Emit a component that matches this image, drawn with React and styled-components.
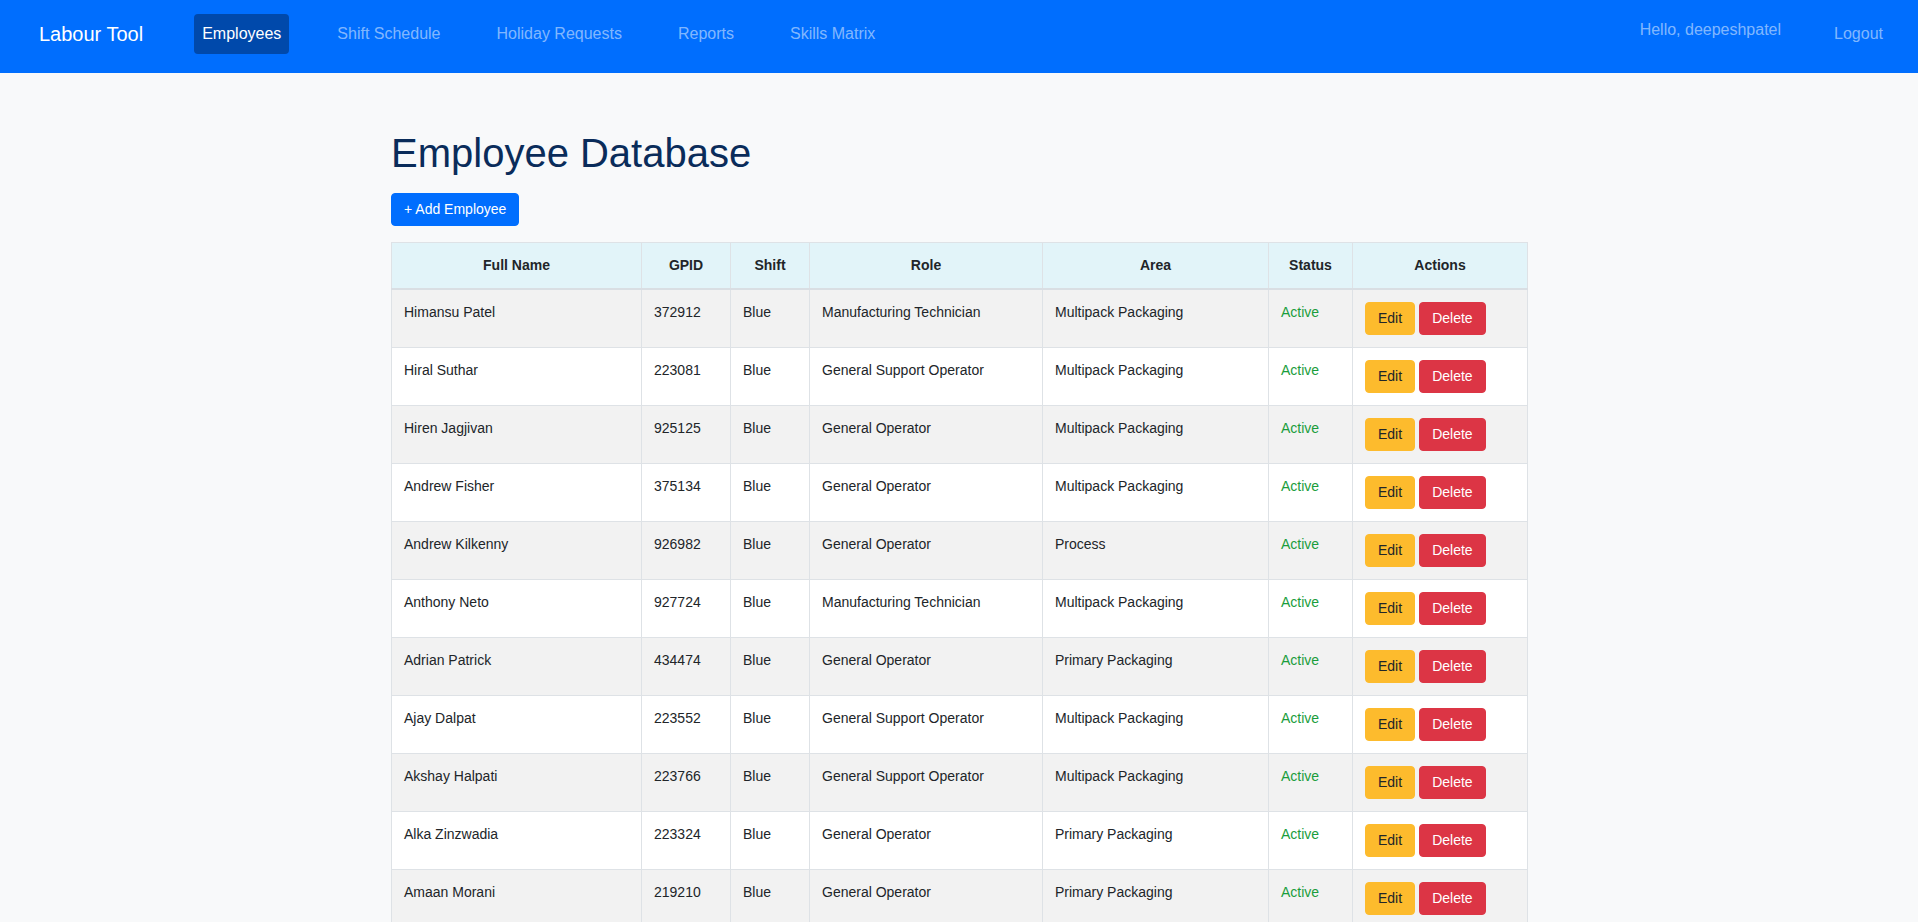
import styled, { createGlobalStyle } from "styled-components";

const GlobalStyle = createGlobalStyle`
  * {
    box-sizing: border-box;
  }
  body {
    margin: 0;
    font-family: "Liberation Sans", Helvetica, Arial, sans-serif;
    color: #212529;
    background: #f8f9fa;
  }
`;

const Page = styled.div`
  height: 100vh;
  display: flex;
  flex-direction: column;
`;

const Navbar = styled.nav`
  flex: none;
  height: 73px;
  display: flex;
  align-items: flex-start;
  justify-content: space-between;
  padding: 14px 27px 0 39px;
  background: #006efe;
`;

const NavLeft = styled.div`
  display: flex;
  align-items: flex-start;
  gap: 51px;
`;

const Brand = styled.a`
  font-size: 20px;
  line-height: 40px;
  color: #fff;
  text-decoration: none;
`;

const NavLinks = styled.div`
  display: flex;
  gap: 40px;
`;

const NavLink = styled.a`
  font-size: 16px;
  line-height: 24px;
  padding: 8px;
  border-radius: 4px;
  text-decoration: none;
  cursor: pointer;
  color: ${(p) => (p.$active ? "#fff" : "rgba(255, 255, 255, 0.52)")};
  background: ${(p) => (p.$active ? "#0049ab" : "transparent")};
`;

const NavRight = styled.div`
  display: flex;
  align-items: flex-start;
`;

const Greeting = styled.span`
  font-size: 16px;
  line-height: 24px;
  margin-top: 4px;
  margin-right: 45px;
  color: rgba(255, 255, 255, 0.52);
`;

const Main = styled.main`
  flex: 1;
  overflow-y: auto;
  scrollbar-width: none;
  padding-top: 56px;
`;

const Container = styled.div`
  width: 1136px;
  margin: 0 auto;
`;

const Title = styled.h1`
  margin: 0 0 16px;
  font-size: 40px;
  line-height: 48px;
  font-weight: 400;
  color: #0a2c5a;
`;

const Button = styled.button`
  font-family: inherit;
  font-size: 14px;
  line-height: 21px;
  padding: 5px 12px;
  border: 1px solid ${(p) => p.$bg};
  border-radius: 4px;
  background: ${(p) => p.$bg};
  color: ${(p) => p.$color || "#fff"};
  cursor: pointer;
`;

const Table = styled.table`
  margin-top: 16px;
  width: 100%;
  table-layout: fixed;
  border-collapse: collapse;
  font-size: 14px;
  line-height: 21px;
`;

const Th = styled.th`
  padding: 12px;
  font-weight: 700;
  text-align: center;
  background: #e2f4f9;
  border: 1px solid #dee2e6;
  border-bottom: 2px solid #d9dee3;
`;

const Row = styled.tr`
  background: ${(p) => (p.$odd ? "#f2f2f2" : "#fff")};
`;

const Td = styled.td`
  padding: 12px;
  vertical-align: top;
  border: 1px solid #dee2e6;
  color: ${(p) => p.$color || "#212529"};
`;

const Actions = styled.div`
  display: flex;
  gap: 4px;
`;

const columns = [
  ["Full Name", 250],
  ["GPID", 89],
  ["Shift", 79],
  ["Role", 233],
  ["Area", 226],
  ["Status", 84],
  ["Actions", 175],
];

const employees = [
  ["Himansu Patel", "372912", "Blue", "Manufacturing Technician", "Multipack Packaging"],
  ["Hiral Suthar", "223081", "Blue", "General Support Operator", "Multipack Packaging"],
  ["Hiren Jagjivan", "925125", "Blue", "General Operator", "Multipack Packaging"],
  ["Andrew Fisher", "375134", "Blue", "General Operator", "Multipack Packaging"],
  ["Andrew Kilkenny", "926982", "Blue", "General Operator", "Process"],
  ["Anthony Neto", "927724", "Blue", "Manufacturing Technician", "Multipack Packaging"],
  ["Adrian Patrick", "434474", "Blue", "General Operator", "Primary Packaging"],
  ["Ajay Dalpat", "223552", "Blue", "General Support Operator", "Multipack Packaging"],
  ["Akshay Halpati", "223766", "Blue", "General Support Operator", "Multipack Packaging"],
  ["Alka Zinzwadia", "223324", "Blue", "General Operator", "Primary Packaging"],
  ["Amaan Morani", "219210", "Blue", "General Operator", "Primary Packaging"],
];

function App() {
  return (
    <>
      <GlobalStyle />
      <Page>
        <Navbar>
          <NavLeft>
            <Brand>Labour Tool</Brand>
            <NavLinks>
              <NavLink $active>Employees</NavLink>
              <NavLink>Shift Schedule</NavLink>
              <NavLink>Holiday Requests</NavLink>
              <NavLink>Reports</NavLink>
              <NavLink>Skills Matrix</NavLink>
            </NavLinks>
          </NavLeft>
          <NavRight>
            <Greeting>Hello, deepeshpatel</Greeting>
            <NavLink>Logout</NavLink>
          </NavRight>
        </Navbar>
        <Main>
          <Container>
            <Title>Employee Database</Title>
            <Button $bg="#006efe">+ Add Employee</Button>
            <Table>
              <colgroup>
                {columns.map(([name, w]) => (
                  <col key={name} style={{ width: w }} />
                ))}
              </colgroup>
              <thead>
                <tr>
                  {columns.map(([name]) => (
                    <Th key={name}>{name}</Th>
                  ))}
                </tr>
              </thead>
              <tbody>
                {employees.map((e, i) => (
                  <Row key={e[1]} $odd={i % 2 === 0}>
                    {e.map((v, j) => (
                      <Td key={j}>{v}</Td>
                    ))}
                    <Td $color="#1a9d3c">Active</Td>
                    <Td>
                      <Actions>
                        <Button $bg="#fdbb2d" $color="#212529">Edit</Button>
                        <Button $bg="#dc3545">Delete</Button>
                      </Actions>
                    </Td>
                  </Row>
                ))}
              </tbody>
            </Table>
          </Container>
        </Main>
      </Page>
    </>
  );
}

export default App;
